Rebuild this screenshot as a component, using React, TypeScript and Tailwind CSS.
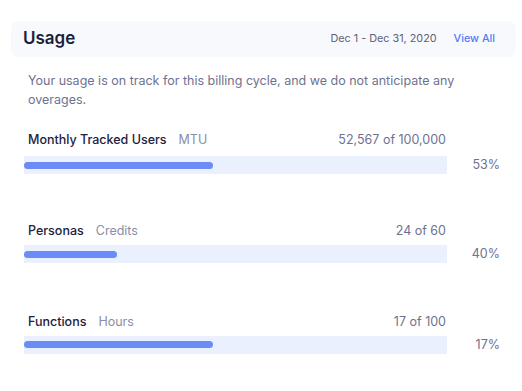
import React from 'react';

type Metric = {
  name: string;
  unit: string;
  value: string;
  percent: string;
  fill: number; // px width of the filled bar
  top: string;
  gap: string;
};

const METRICS: Metric[] = [
  { name: 'Monthly Tracked Users', unit: 'MTU', value: '52,567 of 100,000', percent: '53%', fill: 189, top: 'mt-0', gap: 'mt-[7px]' },
  { name: 'Personas', unit: 'Credits', value: '24 of 60', percent: '40%', fill: 93, top: 'mt-[47px]', gap: 'mt-[5px]' },
  { name: 'Functions', unit: 'Hours', value: '17 of 100', percent: '17%', fill: 189, top: 'mt-[49px]', gap: 'mt-[5px]' },
];

function UsageRow({ m }: { m: Metric }) {
  return (
    <div className={`flex flex-col ${m.top}`}>
      <div className="flex w-[423px] items-center justify-between pl-1 pr-[1px] text-[12.5px] leading-[18px]">
        <div className="flex items-center gap-3">
          <span className="font-medium text-[#1d2140]">{m.name}</span>
          <span className="text-[#8a8ea8]">{m.unit}</span>
        </div>
        <span className="text-[#6e7290]">{m.value}</span>
      </div>
      <div className={`flex items-center ${m.gap}`}>
        <div className="flex h-[18px] w-[423px] items-center bg-[#eaf0fd]">
          <div className="h-[7px] rounded-full bg-[#6b8cf6]" style={{ width: m.fill }} />
        </div>
        <span className="ml-auto pr-[22px] text-[12.5px] text-[#6e7290]">{m.percent}</span>
      </div>
    </div>
  );
}

export default function App() {
  return (
    <div className="h-[391px] w-[522px] bg-white font-['Inter',sans-serif]">
      <div className="pl-[11px] pr-[6px] pt-[21px]">
        <div className="flex h-[36px] items-center justify-between rounded-lg bg-[#f8f9fd] pl-3 pr-[21px]">
          <h2 className="text-[17px] font-semibold text-[#1b1f3b]">Usage</h2>
          <div className="flex items-center gap-[17px] text-[10.8px]">
            <span className="text-[#5d6177]">Dec 1 - Dec 31, 2020</span>
            <span className="font-medium text-[#4f7cf6]">View All</span>
          </div>
        </div>
      </div>

      <p className="ml-[28px] mt-[14px] w-[460px] text-[12.5px] leading-[19px] text-[#6e7290]">
        Your usage is on track for this billing cycle, and we do not anticipate any overages.
      </p>

      <div className="ml-[24px] mt-[22px] flex flex-col">
        {METRICS.map((m) => (
          <UsageRow key={m.name} m={m} />
        ))}
      </div>
    </div>
  );
}
